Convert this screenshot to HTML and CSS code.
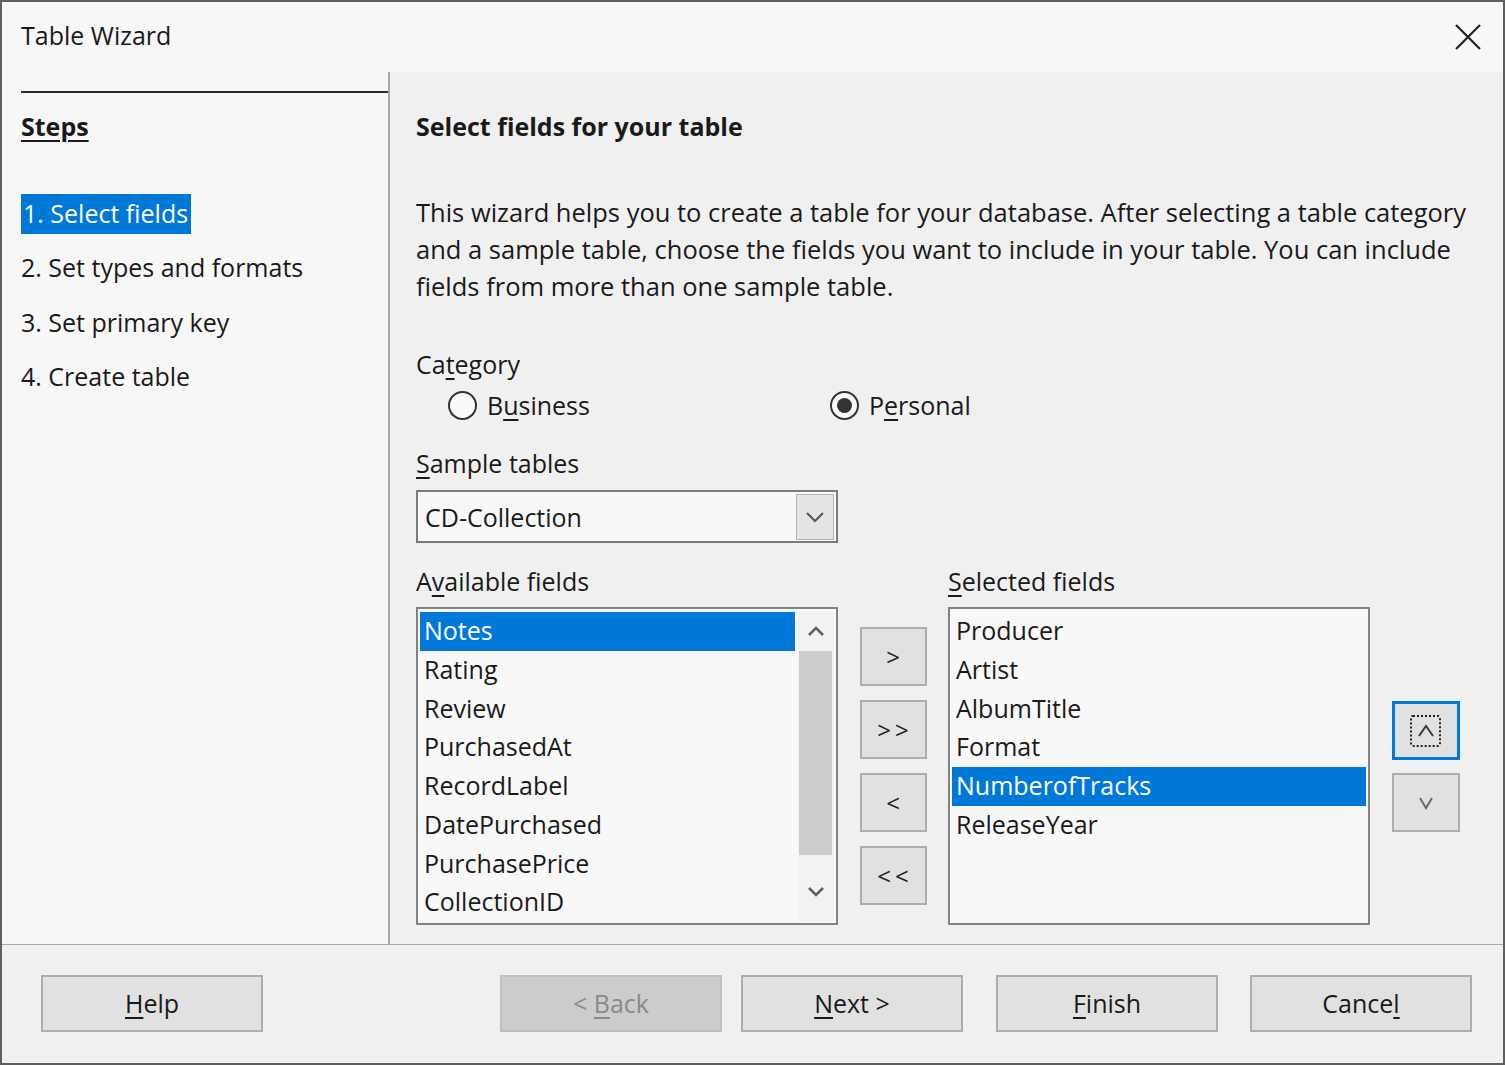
FILE: index.html
```html
<!DOCTYPE html>
<html lang="en">
<head>
<meta charset="utf-8">
<title>Table Wizard</title>
<link rel="stylesheet" href="styles.css">
</head>
<body>
<div class="window">
  <div class="titlebar">
    <span class="title">Table Wizard</span>
    <svg class="close" width="26" height="26" viewBox="0 0 26 26"><path d="M1 1 L25 25 M25 1 L1 25" stroke="#222" stroke-width="2.2" fill="none"/></svg>
  </div>
  <div class="main">
    <aside class="steps">
      <div class="rule"></div>
      <div class="steps-title">Steps</div>
      <ol class="step-list">
        <li class="step"><span class="current">1. Select fields</span></li>
        <li class="step">2. Set types and formats</li>
        <li class="step">3. Set primary key</li>
        <li class="step">4. Create table</li>
      </ol>
    </aside>
    <section class="content">
      <div class="heading">Select fields for your table</div>
      <p class="desc">This wizard helps you to create a table for your database. After selecting a table category<br>and a sample table, choose the fields you want to include in your table. You can include<br>fields from more than one sample table.</p>
      <div class="label cat-label">Ca<u>t</u>egory</div>
      <div class="radios">
        <label class="radio"><span class="circle"></span><span>B<u>u</u>siness</span></label>
        <label class="radio"><span class="circle checked"></span><span>P<u>e</u>rsonal</span></label>
      </div>
      <div class="label sample-label"><u>S</u>ample tables</div>
      <div class="combo">
        <span class="combo-text">CD-Collection</span>
        <span class="combo-btn"><svg width="20" height="12" viewBox="0 0 20 12"><path d="M2 2 L10 10 L18 2" stroke="#555" stroke-width="2" fill="none"/></svg></span>
      </div>
      <div class="fields">
        <div class="label">A<u>v</u>ailable fields</div>
        <div></div>
        <div class="label"><u>S</u>elected fields</div>
        <div></div>

        <div class="listbox">
          <div class="rows">
            <div class="row sel">Notes</div>
            <div class="row">Rating</div>
            <div class="row">Review</div>
            <div class="row">PurchasedAt</div>
            <div class="row">RecordLabel</div>
            <div class="row">DatePurchased</div>
            <div class="row">PurchasePrice</div>
            <div class="row">CollectionID</div>
          </div>
          <div class="scrollbar">
            <div class="arrow"><svg width="18" height="11" viewBox="0 0 18 11"><path d="M2 9 L9 2 L16 9" stroke="#606060" stroke-width="2.6" fill="none"/></svg></div>
            <div class="thumb"></div>
            <div class="arrow down"><svg width="18" height="11" viewBox="0 0 18 11"><path d="M2 2 L9 9 L16 2" stroke="#606060" stroke-width="2.6" fill="none"/></svg></div>
          </div>
        </div>

        <div class="transfer">
          <button class="btn small">&gt;</button>
          <button class="btn small double">&gt;&gt;</button>
          <button class="btn small">&lt;</button>
          <button class="btn small double">&lt;&lt;</button>
        </div>

        <div class="listbox">
          <div class="rows">
            <div class="row">Producer</div>
            <div class="row">Artist</div>
            <div class="row">AlbumTitle</div>
            <div class="row">Format</div>
            <div class="row sel">NumberofTracks</div>
            <div class="row">ReleaseYear</div>
          </div>
        </div>

        <div class="order">
          <button class="btn focus"><span class="focus-rect"><svg width="18" height="14" viewBox="0 0 18 14"><path d="M2 12 L9 2 L16 12" stroke="#3a3a3a" stroke-width="2" fill="none"/></svg></span></button>
          <button class="btn"><svg width="16" height="14" viewBox="0 0 16 14"><path d="M2 2 L8 12 L14 2" stroke="#6a6a6a" stroke-width="2" fill="none"/></svg></button>
        </div>
      </div>
    </section>
  </div>
  <div class="footer">
    <button class="fbtn"><u>H</u>elp</button>
    <div class="spacer"></div>
    <button class="fbtn disabled">&lt; <u>B</u>ack</button>
    <button class="fbtn next"><u>N</u>ext &gt;</button>
    <button class="fbtn finish"><u>F</u>inish</button>
    <button class="fbtn cancel">Cance<u>l</u></button>
  </div>
</div>
</body>
</html>
```
FILE: styles.css
```css
* { box-sizing: border-box; }
html, body { margin: 0; padding: 0; }
body {
  width: 1505px;
  height: 1065px;
  font-family: "Open Sans", "Noto Sans", sans-serif;
  font-size: 25px;
  color: #1a1a1a;
  background: #5f5f5f;
  overflow: hidden;
}
u { text-decoration-thickness: 2px; text-underline-offset: 4px; }

.window {
  width: 1505px;
  height: 1065px;
  border: 2px solid #5f5f5f;
  background: #f0f0f0;
  display: flex;
  flex-direction: column;
}

.titlebar {
  height: 70px;
  flex: none;
  background: #f7f7f7;
  display: flex;
  align-items: center;
  justify-content: space-between;
  padding: 0 22px 3px 19px;
}
.title { line-height: 37px; }
.close { margin-top: 3px; }

.main { flex: 1; display: flex; min-height: 0; }

.steps {
  width: 388px;
  flex: none;
  background: #f7f7f7;
  border-right: 2px solid #a8a8a8;
  padding: 19px 0 0 19px;
}
.rule { height: 2px; background: #2a2a2a; }
.steps-title {
  margin-top: 14.5px;
  line-height: 37px;
  font-weight: 700;
  text-decoration: underline;
  text-decoration-thickness: 2px;
  text-underline-offset: 4px;
}
.step-list {
  list-style: none;
  margin: 49.5px 0 0;
  padding: 0;
  display: flex;
  flex-direction: column;
  gap: 14.3px;
}
.step { height: 40px; line-height: 38px; }
.current {
  display: inline-block;
  height: 40px;
  background: #0078d7;
  color: #fff;
  padding: 0 3px 0 2px;
}

.content {
  flex: 1;
  padding: 35.5px 0 0 26px;
}
.heading { line-height: 37px; font-weight: 700; }
.desc { margin: 49px 0 0; line-height: 37px; white-space: nowrap; font-size: 25.5px; }
.label { line-height: 37px; }
.cat-label { margin-top: 41px; }
.radios {
  margin-top: 4px;
  height: 37px;
  display: flex;
  padding-left: 32px;
}
.radio {
  width: 382px;
  display: flex;
  align-items: center;
  gap: 10px;
}
.circle {
  width: 29px;
  height: 29px;
  border-radius: 50%;
  border: 2px solid #333;
  background: #fafafa;
  display: flex;
  align-items: center;
  justify-content: center;
}
.circle.checked::after {
  content: "";
  width: 15px;
  height: 15px;
  border-radius: 50%;
  background: #333;
}
.sample-label { margin-top: 21px; }

.combo {
  margin-top: 8.5px;
  width: 422px;
  height: 53px;
  border: 2px solid #7c7c7c;
  background: #f8f8f8;
  display: flex;
  align-items: center;
  padding: 2px;
}
.combo-text { padding-left: 5px; }
.combo-btn {
  margin-left: auto;
  width: 38px;
  height: 46px;
  background: #e4e4e4;
  border: 1px solid #b3b3b3;
  display: flex;
  align-items: center;
  justify-content: center;
}

.fields {
  margin-top: 19.5px;
  display: grid;
  grid-template-columns: 422px 67px 422px 68px;
  grid-template-rows: 37px 318px;
  column-gap: 21.5px;
  row-gap: 7.5px;
}

.listbox {
  border: 2px solid #828282;
  background: #f8f8f8;
  display: flex;
  padding: 3px 2px 2px 2px;
}
.rows { flex: 1; min-width: 0; }
.row {
  height: 38.75px;
  line-height: 37.5px;
  padding-left: 4px;
  white-space: nowrap;
}
.row.sel { background: #0078d7; color: #fff; }

.scrollbar {
  width: 36px;
  margin-left: 3px;
  display: flex;
  flex-direction: column;
  background: #f2f2f2;
}
.arrow {
  height: 39px;
  display: flex;
  align-items: center;
  justify-content: center;
}
.arrow.down { margin-top: auto; height: 60px; }
.thumb {
  height: 204px;
  margin: 0 2px 0 1px;
  background: #cdcdcd;
}

.transfer {
  display: flex;
  flex-direction: column;
  gap: 14px;
  padding-top: 20px;
}
.order {
  display: flex;
  flex-direction: column;
  gap: 13px;
  padding-top: 94px;
}
.btn {
  height: 59px;
  background: #e1e1e1;
  border: 2px solid #adadad;
  font-family: "Open Sans", "Noto Sans", sans-serif;
  font-size: 24px;
  color: #222;
  display: flex;
  align-items: center;
  justify-content: center;
  padding: 0;
}
.btn.double { letter-spacing: 4px; padding-left: 4px; }
.btn.focus { border: 3px solid #0078d7; }
.focus-rect {
  width: 31px;
  height: 32px;
  border: 2px dotted #222;
  border-radius: 3px;
  display: flex;
  align-items: center;
  justify-content: center;
}

.footer {
  flex: none;
  height: 119px;
  border-top: 1px solid #a9a9a9;
  display: flex;
  align-items: flex-start;
  padding: 30px 31px 0 39px;
}
.spacer { flex: 1; }
.fbtn {
  width: 222px;
  height: 57px;
  background: #e1e1e1;
  border: 2px solid #adadad;
  font-family: "Open Sans", "Noto Sans", sans-serif;
  font-size: 25px;
  color: #1a1a1a;
  padding: 0 0 2px;
}
.fbtn.disabled { background: #cccccc; border-color: #bfbfbf; color: #8a8a8a; }
.fbtn.next { margin-left: 19px; }
.fbtn.finish { margin-left: 33px; }
.fbtn.cancel { margin-left: 32px; }
```
